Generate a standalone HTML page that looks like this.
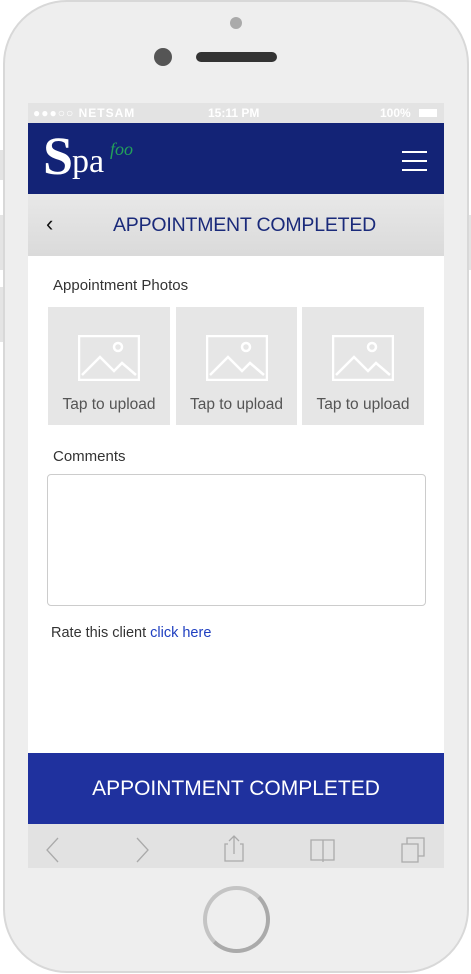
<!DOCTYPE html>
<html><head><style>
*{margin:0;padding:0;box-sizing:border-box}
body{width:471px;height:974px;background:#fff;position:relative;overflow:hidden;font-family:"Liberation Sans",sans-serif}
.phone{position:absolute;left:3px;top:0;width:466px;height:973px;border-radius:64px;background:#eeeeee;border:2px solid #d8d8d8}
.abs{position:absolute}
.scr{position:absolute;left:28px;top:103px;width:416px;height:765px;background:#fff;overflow:hidden}
.ph{position:absolute;top:204px;width:122px;height:118px;background:#e6e6e6;text-align:center;color:#555;font-size:15.5px}
.ph svg{margin-top:28px}
.ph div{margin-top:10px}
</style></head><body>
<div class="abs" style="left:0;top:150px;width:5px;height:30px;background:#e4e4e4"></div>
<div class="abs" style="left:0;top:215px;width:5px;height:55px;background:#e4e4e4"></div>
<div class="abs" style="left:0;top:287px;width:5px;height:55px;background:#e4e4e4"></div>
<div class="abs" style="left:466px;top:215px;width:5px;height:55px;background:#e4e4e4"></div>
<div class="phone"></div>
<div class="abs" style="left:230px;top:17px;width:12px;height:12px;border-radius:50%;background:#aaa"></div>
<div class="abs" style="left:154px;top:48px;width:18px;height:18px;border-radius:50%;background:#555"></div>
<div class="abs" style="left:196px;top:52px;width:81px;height:10px;border-radius:5px;background:#333"></div>
<div class="abs" style="left:203px;top:886px;width:67px;height:67px;border-radius:50%;border:4px solid #c4c4c4;border-right-color:#aaa;border-bottom-color:#aaa"></div>
<div class="scr">
 <div class="abs" style="left:0;top:0;width:416px;height:20px;background:#e3e3e3;color:#fff;font-size:12px;font-weight:bold;line-height:20px">
  <span class="abs" style="left:5px;letter-spacing:1px">●●●○○ NETSAM</span>
  <span class="abs" style="left:180px">15:11 PM</span>
  <span class="abs" style="left:352px">100%</span>
  <span class="abs" style="left:391px;top:6px;width:18px;height:8px;border:1px solid #fff;background:#fff"></span>
 </div>
 <div class="abs" style="left:0;top:20px;width:416px;height:71px;background:#132376">
  <span class="abs" style="left:15px;top:2px;color:#fff;font-family:'Liberation Serif',serif;font-size:54px;font-weight:bold">S</span>
  <span class="abs" style="left:44px;top:20px;color:#fff;font-family:'Liberation Serif',serif;font-size:34px">pa</span>
  <span class="abs" style="left:82px;top:16px;color:#23a05a;font-family:'Liberation Serif',serif;font-size:18px;font-style:italic">foo</span>
  <div class="abs" style="left:374px;top:28px;width:25px;height:2px;background:#fff"></div>
  <div class="abs" style="left:374px;top:37px;width:25px;height:2px;background:#fff"></div>
  <div class="abs" style="left:374px;top:46px;width:25px;height:2px;background:#fff"></div>
 </div>
 <div class="abs" style="left:0;top:91px;width:416px;height:62px;background:linear-gradient(#e8e8e8,#dadada)">
  <span class="abs" style="left:18px;top:17px;font-size:22px;color:#111">‹</span>
  <span class="abs" style="left:85px;top:20px;font-size:19.5px;color:#1a2a7a;letter-spacing:-0.2px">APPOINTMENT COMPLETED</span>
 </div>
 <div class="abs" style="left:25px;top:174px;font-size:15px;color:#333">Appointment Photos</div>
 <div class="ph" style="left:20px"><svg width="62" height="46"><rect x="1" y="1" width="60" height="44" fill="none" stroke="#fff" stroke-width="2.5"/><path d="M4 40L22 22L36 36L44 28L58 40" fill="none" stroke="#fff" stroke-width="2.5"/><circle cx="40" cy="12" r="4" fill="none" stroke="#fff" stroke-width="2.5"/></svg><div>Tap to upload</div></div>
 <div class="ph" style="left:148px;width:121px"><svg width="62" height="46"><rect x="1" y="1" width="60" height="44" fill="none" stroke="#fff" stroke-width="2.5"/><path d="M4 40L22 22L36 36L44 28L58 40" fill="none" stroke="#fff" stroke-width="2.5"/><circle cx="40" cy="12" r="4" fill="none" stroke="#fff" stroke-width="2.5"/></svg><div>Tap to upload</div></div>
 <div class="ph" style="left:274px"><svg width="62" height="46"><rect x="1" y="1" width="60" height="44" fill="none" stroke="#fff" stroke-width="2.5"/><path d="M4 40L22 22L36 36L44 28L58 40" fill="none" stroke="#fff" stroke-width="2.5"/><circle cx="40" cy="12" r="4" fill="none" stroke="#fff" stroke-width="2.5"/></svg><div>Tap to upload</div></div>
 <div class="abs" style="left:25px;top:345px;font-size:15px;color:#333">Comments</div>
 <div class="abs" style="left:19px;top:371px;width:379px;height:132px;border:1px solid #ccc;border-radius:4px"></div>
 <div class="abs" style="left:23px;top:522px;font-size:14.5px;color:#333">Rate this client <span style="color:#1f3fc0">click here</span></div>
 <div class="abs" style="left:0;top:650px;width:416px;height:71px;background:#1f319e;color:#fff;font-size:21px;text-align:center;line-height:71px">APPOINTMENT COMPLETED</div>
 <div class="abs" style="left:0;top:721px;width:416px;height:44px;background:#e2e2e2">
  <svg class="abs" style="left:0;top:0" width="416" height="44" fill="none" stroke="#aaa" stroke-width="1.3">
   <path d="M30 14L19 26L30 38"/><path d="M109 14L120 26L109 38"/>
   <path d="M200 20H197V37H215V20H212M206 30V12M201 17L206 12L211 17"/>
   <path d="M283 16H306V36H283ZM295 16V38"/>
   <path d="M374 20H390V38H374ZM379 20V14H396V32H390"/>
  </svg>
 </div>
</div>
</body></html>
